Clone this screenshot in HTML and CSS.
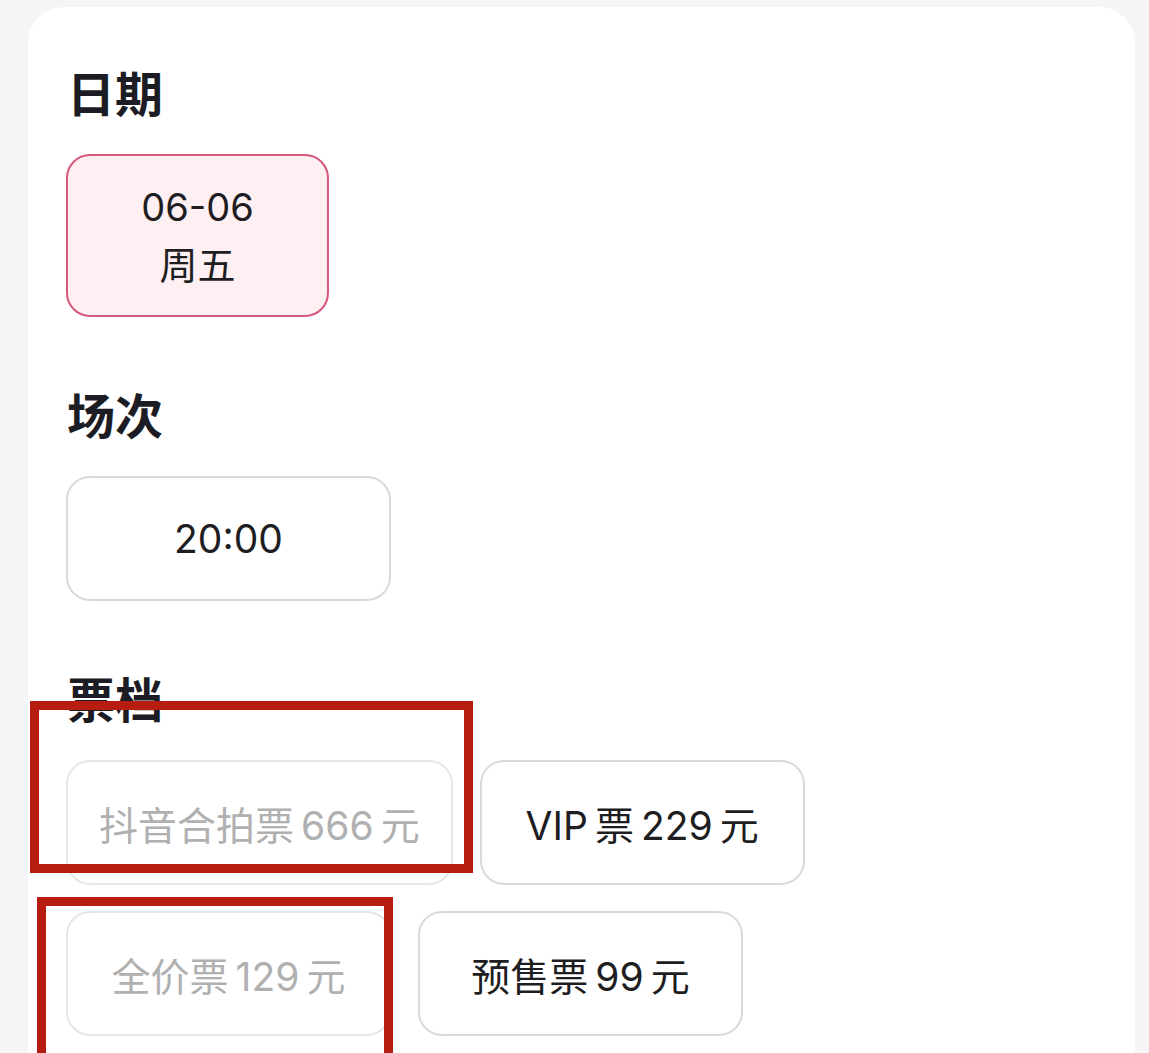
FILE: index.html
```html
<!DOCTYPE html>
<html lang="zh-CN">
<head>
  <meta charset="UTF-8" />
  <meta name="viewport" content="width=device-width, initial-scale=1.0" />
  <title>选择场次</title>
  <link rel="stylesheet" href="styles.css">
</head>
<body>
  <div class="page">
    <div class="card">
      <section class="group">
        <h2 class="group-title">日期</h2>
        <div class="options">
          <button class="date-opt active">
            <span>06-06</span>
            <span>周五</span>
          </button>
        </div>
      </section>

      <section class="group">
        <h2 class="group-title">场次</h2>
        <div class="options">
          <button class="opt">20:00</button>
        </div>
      </section>

      <section class="group">
        <h2 class="group-title">票档</h2>
        <div class="options">
          <button class="opt disabled">抖音合拍票&thinsp;666&thinsp;元</button>
          <button class="opt">VIP&thinsp;票&thinsp;229&thinsp;元</button>
          <button class="opt disabled">全价票&thinsp;129&thinsp;元</button>
          <button class="opt">预售票&thinsp;99&thinsp;元</button>
        </div>
      </section>
    </div>

    <!-- review marks drawn over the sold-out tiers -->
    <div class="mark mark-one"></div>
    <div class="mark mark-two"></div>
  </div>
</body>
</html>
```

FILE: styles.css
```css
html, body {
  margin: 0;
  height: 100%;
  overflow: hidden;
  background: #f5f5f5;
}
body {
  font-family: "Inter", "Noto Sans CJK SC", sans-serif;
  color: #1e1e22;
}
.page {
  position: relative;
  padding: 7px 14px 0 28px;
}
.card {
  background: #fff;
  border-radius: 36px 36px 0 0;
  padding: 64px 38px 80px;
  min-height: 1100px;
  display: flex;
  flex-direction: column;
  gap: 76px;
}
.group-title {
  margin: 0 0 35px;
  padding-left: 1px;
  font-size: 48px;
  line-height: 48px;
  font-weight: 700;
  color: #1b1c24;
}
.options {
  display: flex;
  flex-wrap: wrap;
  gap: 26px 27px;
}
.opt {
  box-sizing: border-box;
  min-width: 325px;
  height: 125px;
  padding: 0 31px;
  border: 2px solid #dadada;
  border-radius: 24px;
  background: #fff;
  font-family: inherit;
  font-size: 39px;
  color: #1e1e22;
  cursor: pointer;
}
.opt.disabled {
  color: #b0b0b0;
  border-color: #e6e6e6;
  cursor: default;
}
.date-opt {
  box-sizing: border-box;
  width: 263px;
  height: 163px;
  border: 2px solid #d6587c;
  border-radius: 24px;
  background: #fdeff2;
  display: flex;
  flex-direction: column;
  align-items: center;
  justify-content: center;
  font-family: inherit;
  font-size: 38px;
  line-height: 58px;
  color: #1e1e22;
  cursor: pointer;
}
.mark {
  position: absolute;
  box-sizing: border-box;
  border: 9px solid #b71c11;
}
.mark-one {
  left: 30px;
  top: 701px;
  width: 443px;
  height: 172px;
}
.mark-two {
  left: 37px;
  top: 897px;
  width: 356px;
  height: 220px;
}
```
